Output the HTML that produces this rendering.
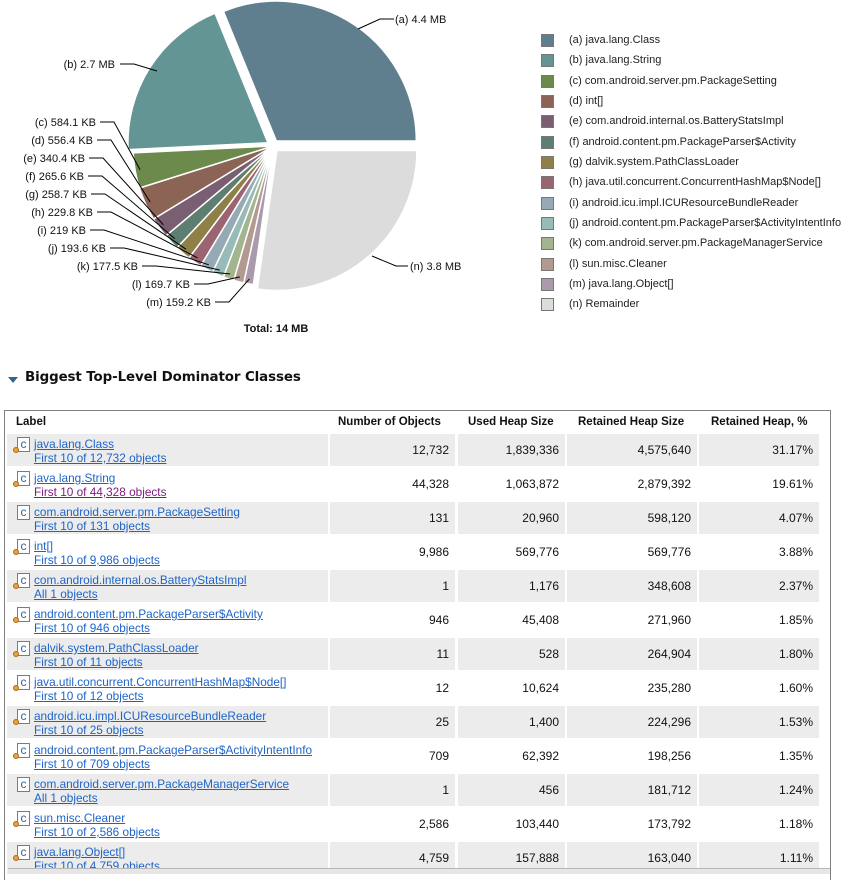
<!DOCTYPE html>
<html><head><meta charset="utf-8">
<style>
*{margin:0;padding:0;box-sizing:border-box}
body{width:853px;height:874px;overflow:hidden;background:#fff;font-family:"Liberation Sans",Arial,sans-serif;position:relative}
svg text{font-family:"Liberation Sans",Arial,sans-serif}
.leg{position:absolute;left:541px;font-size:11px;color:#222}
.leg span{position:absolute;left:0;width:13px;height:13px;border:1px solid #777}
.leg b{position:absolute;left:28px;top:0;font-weight:normal;white-space:nowrap;line-height:13px}
h2{position:absolute;left:25px;top:370px;font-size:13.4px;font-weight:bold;color:#111;font-family:"DejaVu Sans","Liberation Sans",sans-serif;letter-spacing:-0.1px}
.tri{position:absolute;left:8px;top:377px;width:0;height:0;border-left:5px solid transparent;border-right:5px solid transparent;border-top:6px solid #35648e}
.box{position:absolute;left:4px;top:410px;width:827px;height:470px;border:1px solid #808080;border-bottom:none;overflow:hidden}
.hd{position:absolute;top:0;font-size:11.5px;font-weight:bold;color:#111;height:23px;line-height:23px}
.row{position:absolute;left:0;height:32px;width:822px}
.c{position:absolute;top:0;height:32px;font-size:12px}
.g .c{background:#ececec}
.num{text-align:right;line-height:32px;color:#111;padding-right:6px}
.lbl a{position:absolute;left:27px;color:#1e64c8;text-decoration:underline;white-space:nowrap;line-height:13px;font-size:11.8px}
.lbl a.v{color:#7d1a7d}
.ic{position:absolute;left:10px;top:3px;width:13px;height:15px;border:1px solid #9a7a3a;background:#fff;font-size:12px;line-height:13px;text-align:center;color:#35648e}
.dot{position:absolute;left:6px;top:13px;width:6px;height:6px;border-radius:3px;background:#e8a040;border:1px solid #b06a10}
.sb{position:absolute;left:8px;top:868px;width:822px;height:6px;background:#e6e6e6;border-top:1px solid #b8b8b8}
</style></head><body>
<svg id="pie" width="530" height="345" style="position:absolute;left:0;top:0">
<g id="slices"></g>
<g stroke="#000" stroke-width="1" fill="none">
<polyline points="358,29 380,19 394,19"/>
<polyline points="120,64 134,64 157,71"/>
<polyline points="372,256 396,266 408,266"/>
<g id="leads"></g>
</g>
<g font-size="11" fill="#111">
<text x="395" y="23">(a)  4.4 MB</text>
<text x="115" y="68" text-anchor="end">(b)  2.7 MB</text>
<text x="410" y="270">(n)  3.8 MB</text>
<text x="96" y="126" text-anchor="end">(c)  584.1 KB</text>
<text x="93" y="144" text-anchor="end">(d)  556.4 KB</text>
<text x="85" y="162" text-anchor="end">(e)  340.4 KB</text>
<text x="84" y="180" text-anchor="end">(f)  265.6 KB</text>
<text x="87" y="198" text-anchor="end">(g)  258.7 KB</text>
<text x="93" y="216" text-anchor="end">(h)  229.8 KB</text>
<text x="86" y="234" text-anchor="end">(i)  219 KB</text>
<text x="106" y="252" text-anchor="end">(j)  193.6 KB</text>
<text x="138" y="270" text-anchor="end">(k)  177.5 KB</text>
<text x="190" y="288" text-anchor="end">(l)  169.7 KB</text>
<text x="211" y="306" text-anchor="end">(m)  159.2 KB</text>
<text x="276" y="332" text-anchor="middle" font-weight="bold">Total: 14 MB</text>
</g>
</svg>
<script>
(function(){
var cx=273,cy=146,R=140;
var d=[["n",27.24,"#dcdcdc",6],["m",1.11,"#ab9aab",0],["l",1.18,"#b39a90",0],["k",1.24,"#a3b58f",0],["j",1.35,"#98bbb8",0],["i",1.53,"#95aab5",0],["h",1.60,"#9a6470",0],["g",1.80,"#8f8048",0],["f",1.85,"#5f7e72",0],["e",2.37,"#7a5f72",0],["d",3.88,"#8b6456",0],["c",4.07,"#6b8a4c",0],["b",19.61,"#629593",6],["a",31.17,"#5f7f8f",6]];
var ends={c:[100,122],d:[97,140],e:[89,158],f:[88,176],g:[91,194],h:[97,212],i:[90,230],j:[110,248],k:[142,266],l:[194,284],m:[215,302]};
var a0=0,s="",l="";
d.forEach(function(x){
 var a1=a0+x[1]*3.6,r0=a0*Math.PI/180,r1=a1*Math.PI/180,mid=(r0+r1)/2;
 var ox=cx+x[3]*Math.cos(mid),oy=cy+x[3]*Math.sin(mid);
 var p1=[ox+R*Math.cos(r0),oy+R*Math.sin(r0)],p2=[ox+R*Math.cos(r1),oy+R*Math.sin(r1)];
 s+='<path d="M'+ox+','+oy+'L'+p1+'A'+R+','+R+' 0 '+((a1-a0)>180?1:0)+' 1 '+p2+'Z" fill="'+x[2]+'" stroke="#fff" stroke-width="1.5"/>';
 if(ends[x[0]]){var e=ends[x[0]];var ex=cx+135*Math.cos(mid),ey=cy+135*Math.sin(mid);
  l+='<polyline points="'+e[0]+','+e[1]+' '+(e[0]+14)+','+e[1]+' '+ex.toFixed(1)+','+ey.toFixed(1)+'"/>';}
 a0=a1;});
document.getElementById("slices").innerHTML=s;
document.getElementById("leads").innerHTML=l;
})();
</script>
<div class="leg" style="top:34px"><span style="background:#5f7f8f"></span><b>(a)  java.lang.Class</b></div>
<div class="leg" style="top:54px"><span style="background:#629593"></span><b>(b)  java.lang.String</b></div>
<div class="leg" style="top:75px"><span style="background:#6b8a4c"></span><b>(c)  com.android.server.pm.PackageSetting</b></div>
<div class="leg" style="top:95px"><span style="background:#8b6456"></span><b>(d)  int[]</b></div>
<div class="leg" style="top:115px"><span style="background:#7a5f72"></span><b>(e)  com.android.internal.os.BatteryStatsImpl</b></div>
<div class="leg" style="top:136px"><span style="background:#5f7e72"></span><b>(f)  android.content.pm.PackageParser$Activity</b></div>
<div class="leg" style="top:156px"><span style="background:#8f8048"></span><b>(g)  dalvik.system.PathClassLoader</b></div>
<div class="leg" style="top:176px"><span style="background:#9a6470"></span><b>(h)  java.util.concurrent.ConcurrentHashMap$Node[]</b></div>
<div class="leg" style="top:197px"><span style="background:#95aab5"></span><b>(i)  android.icu.impl.ICUResourceBundleReader</b></div>
<div class="leg" style="top:217px"><span style="background:#98bbb8"></span><b>(j)  android.content.pm.PackageParser$ActivityIntentInfo</b></div>
<div class="leg" style="top:237px"><span style="background:#a3b58f"></span><b>(k)  com.android.server.pm.PackageManagerService</b></div>
<div class="leg" style="top:258px"><span style="background:#b39a90"></span><b>(l)  sun.misc.Cleaner</b></div>
<div class="leg" style="top:278px"><span style="background:#ab9aab"></span><b>(m)  java.lang.Object[]</b></div>
<div class="leg" style="top:298px"><span style="background:#dcdcdc"></span><b>(n)  Remainder</b></div>

<div class="tri"></div>
<h2>Biggest Top-Level Dominator Classes</h2>
<div class="box" id="box">
<div class="hd" style="left:11px">Label</div>
<div class="hd" style="left:333px">Number of Objects</div>
<div class="hd" style="left:463px">Used Heap Size</div>
<div class="hd" style="left:573px">Retained Heap Size</div>
<div class="hd" style="left:706px">Retained Heap, %</div>
</div>
<div class="sb"></div>
<script>
(function(){
var rows=[["java.lang.Class","First 10 of 12,732 objects","12,732","1,839,336","4,575,640","31.17%",1],
["java.lang.String","First 10 of 44,328 objects","44,328","1,063,872","2,879,392","19.61%",1,1],
["com.android.server.pm.PackageSetting","First 10 of 131 objects","131","20,960","598,120","4.07%",0],
["int[]","First 10 of 9,986 objects","9,986","569,776","569,776","3.88%",1],
["com.android.internal.os.BatteryStatsImpl","All 1 objects","1","1,176","348,608","2.37%",1],
["android.content.pm.PackageParser$Activity","First 10 of 946 objects","946","45,408","271,960","1.85%",1],
["dalvik.system.PathClassLoader","First 10 of 11 objects","11","528","264,904","1.80%",1],
["java.util.concurrent.ConcurrentHashMap$Node[]","First 10 of 12 objects","12","10,624","235,280","1.60%",1],
["android.icu.impl.ICUResourceBundleReader","First 10 of 25 objects","25","1,400","224,296","1.53%",1],
["android.content.pm.PackageParser$ActivityIntentInfo","First 10 of 709 objects","709","62,392","198,256","1.35%",1],
["com.android.server.pm.PackageManagerService","All 1 objects","1","456","181,712","1.24%",0],
["sun.misc.Cleaner","First 10 of 2,586 objects","2,586","103,440","173,792","1.18%",1],
["java.lang.Object[]","First 10 of 4,759 objects","4,759","157,888","163,040","1.11%",1]];
var cols=[[2,321],[325,125],[453,107],[562,130],[694,120]];
var h="";
rows.forEach(function(r,i){
 var top=23+i*34;
 h+='<div class="row'+(i%2==0?' g':'')+'" style="top:'+top+'px">';
 h+='<div class="c lbl" style="left:'+cols[0][0]+'px;width:'+cols[0][1]+'px"><div class="ic">c</div>'+(r[6]?'<div class="dot"></div>':'')+'<a style="top:4px">'+r[0]+'</a><a'+(r[7]?' class="v"':'')+' style="top:18px">'+r[1]+'</a></div>';
 for(var k=1;k<5;k++)h+='<div class="c num" style="left:'+cols[k][0]+'px;width:'+cols[k][1]+'px">'+r[k+1]+'</div>';
 h+='</div>';});
document.getElementById("box").insertAdjacentHTML("beforeend",h);
})();
</script>
</body></html>
